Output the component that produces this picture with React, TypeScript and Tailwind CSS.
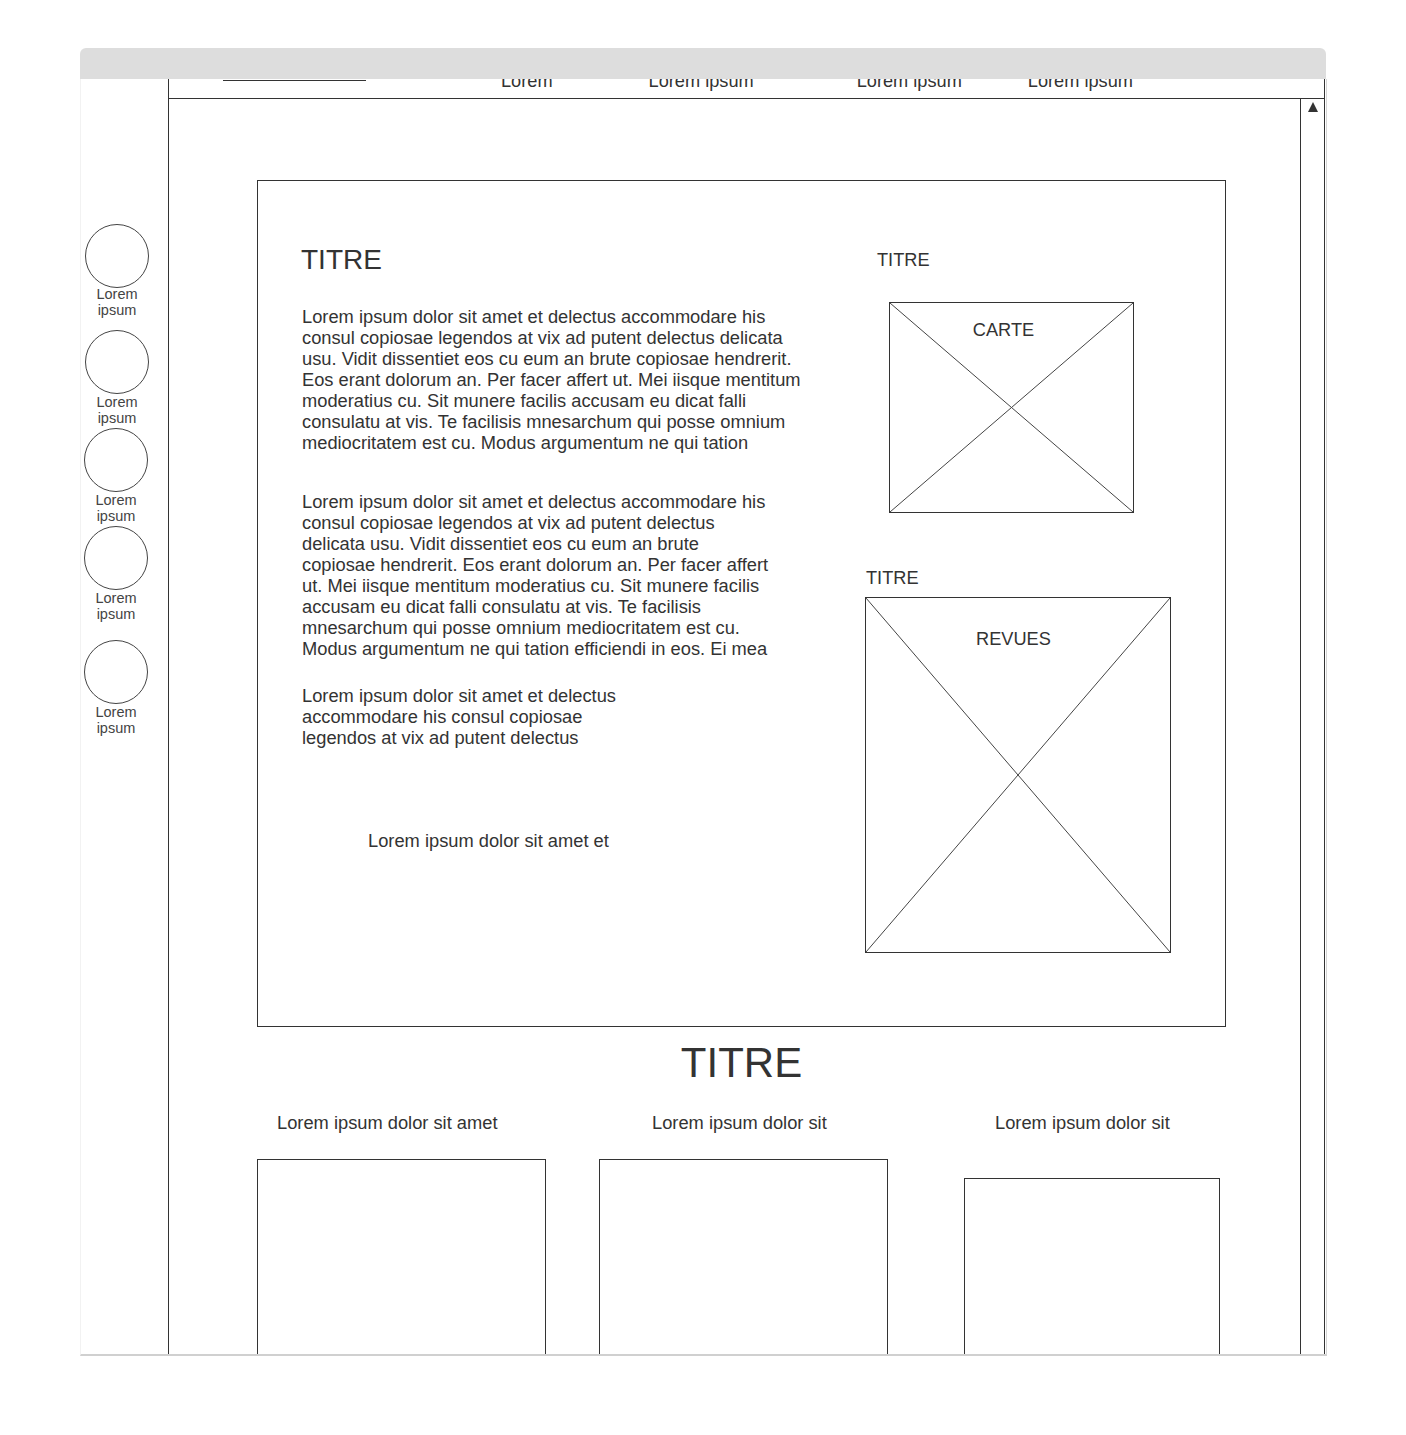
const SIDE_ITEMS = [
  { mt: "mt-[145px]", ml: "ml-[4px]", lm: "-mt-[2px]" },
  { mt: "mt-[12px]", ml: "ml-[4px]", lm: "mt-0" },
  { mt: "mt-[2px]", ml: "ml-[3px]", lm: "mt-0" },
  { mt: "mt-[2px]", ml: "ml-[3px]", lm: "mt-0" },
  { mt: "mt-[18px]", ml: "ml-[3px]", lm: "mt-0" },
];

const P1 = [
  "Lorem ipsum dolor sit amet et delectus accommodare his",
  "consul copiosae legendos at vix ad putent delectus delicata",
  "usu. Vidit dissentiet eos cu eum an brute copiosae hendrerit.",
  "Eos erant dolorum an. Per facer affert ut. Mei iisque mentitum",
  "moderatius cu. Sit munere facilis accusam eu dicat falli",
  "consulatu at vis. Te facilisis mnesarchum qui posse omnium",
  "mediocritatem est cu. Modus argumentum ne qui tation",
];

const P2 = [
  "Lorem ipsum dolor sit amet et delectus accommodare his",
  "consul copiosae legendos at vix ad putent delectus",
  "delicata usu. Vidit dissentiet eos cu eum an brute",
  "copiosae hendrerit. Eos erant dolorum an. Per facer affert",
  "ut. Mei iisque mentitum moderatius cu. Sit munere facilis",
  "accusam eu dicat falli consulatu at vis. Te facilisis",
  "mnesarchum qui posse omnium mediocritatem est cu.",
  "Modus argumentum ne qui tation efficiendi in eos. Ei mea",
];

const P3 = [
  "Lorem ipsum dolor sit amet et delectus",
  "accommodare his consul copiosae",
  "legendos at vix ad putent delectus",
];

function Lines({ lines, className }: { lines: string[]; className?: string }) {
  return (
    <p className={`text-[18.3px] leading-[21px] whitespace-nowrap ${className ?? ""}`}>
      {lines.map((l, i) => (
        <span key={i} className="block">
          {l}
        </span>
      ))}
    </p>
  );
}

// wireframe image placeholder: box with a cross
function Placeholder({ className, label, labelClass }: { className: string; label: string; labelClass: string }) {
  return (
    <div className={`relative border border-[#333] ${className}`}>
      <svg className="absolute inset-0 h-full w-full" preserveAspectRatio="none" viewBox="0 0 100 100">
        <line x1="0" y1="0" x2="100" y2="100" stroke="#444" strokeWidth="1" vectorEffect="non-scaling-stroke" />
        <line x1="100" y1="0" x2="0" y2="100" stroke="#444" strokeWidth="1" vectorEffect="non-scaling-stroke" />
      </svg>
      <p className={`relative text-center text-[18.2px] leading-[21px] ${labelClass}`}>{label}</p>
    </div>
  );
}

export default function App() {
  return (
    <div className="min-h-[1435px] bg-white pt-[48px] pl-[80px] font-['Liberation_Sans',Arial,sans-serif] text-[#333]">
      <div className="w-[1247px]">
        <div className="mr-px h-[31px] rounded-t-[6px] bg-[#dddddd]" />
        <div className="flex h-[1277px] overflow-hidden border-r border-b-2 border-l border-r-[#d4d4d4] border-b-[#d0d0d0] border-l-[#f2f2f2]">
          {/* left rail */}
          <div className="flex w-[87px] shrink-0 flex-col">
            {SIDE_ITEMS.map((it, i) => (
              <div key={i} className={`flex w-[64px] flex-col items-center ${it.mt} ${it.ml}`}>
                <div className="h-[64px] w-[64px] rounded-full border border-[#444]" />
                <p className={`text-center text-[14.5px] leading-[16px] text-[#444] ${it.lm}`}>
                  Lorem
                  <br />
                  ipsum
                </p>
              </div>
            ))}
          </div>

          {/* main window */}
          <div className="flex w-[1157px] shrink-0 flex-col border-x border-[#333]">
            <div className="relative flex h-[20px] shrink-0 items-start overflow-hidden border-b border-[#333] text-[18.2px] leading-[21px] whitespace-nowrap">
              <div className="absolute top-px left-[54px] h-px w-[143px] bg-[#333]" />
              <span className="-mt-[8px] ml-[332px]">Lorem</span>
              <span className="-mt-[8px] ml-[96px]">Lorem ipsum</span>
              <span className="-mt-[8px] ml-[103px]">Lorem ipsum</span>
              <span className="-mt-[8px] ml-[66px]">Lorem ipsum</span>
            </div>

            <div className="flex min-h-0 flex-1">
              <div className="w-[1131px] shrink-0 pt-[81px] pl-[88px]">
                <div className="w-[969px]">
                  <div className="flex h-[847px] border border-[#333]">
                    <div className="w-[600px] shrink-0 pt-[63px] pl-[43px]">
                      <h1 className="text-[28px] leading-[32px]">TITRE</h1>
                      <Lines lines={P1} className="mt-[30px] ml-px" />
                      <Lines lines={P2} className="mt-[38px] ml-px" />
                      <Lines lines={P3} className="mt-[26px] ml-px" />
                      <Lines lines={["Lorem ipsum dolor sit amet et"]} className="mt-[82px] ml-[67px]" />
                    </div>
                    <div className="flex flex-1 flex-col">
                      <p className="mt-[69px] ml-[19px] text-[18.2px] leading-[21px]">TITRE</p>
                      <Placeholder
                        className="mt-[31px] ml-[31px] h-[211px] w-[245px]"
                        label="CARTE"
                        labelClass="pt-[17px] pr-[16px]"
                      />
                      <p className="mt-[55px] ml-[8px] text-[18.2px] leading-[21px]">TITRE</p>
                      <Placeholder
                        className="mt-[8px] ml-[7px] h-[356px] w-[306px]"
                        label="REVUES"
                        labelClass="pt-[31px] pr-[9px]"
                      />
                    </div>
                  </div>

                  <h2 className="mt-[12px] text-center text-[42px] leading-[48px]">TITRE</h2>

                  <div className="mt-[25px] flex items-start">
                    <div className="w-[289px] shrink-0">
                      <p className="ml-[20px] text-[18.3px] leading-[21px] whitespace-nowrap">Lorem ipsum dolor sit amet</p>
                      <div className="mt-[26px] h-[260px] border border-[#333]" />
                    </div>
                    <div className="ml-[53px] w-[289px] shrink-0">
                      <p className="ml-[53px] text-[18.3px] leading-[21px] whitespace-nowrap">Lorem ipsum dolor sit</p>
                      <div className="mt-[26px] h-[260px] border border-[#333]" />
                    </div>
                    <div className="ml-[76px] w-[256px] shrink-0">
                      <p className="ml-[31px] text-[18.3px] leading-[21px] whitespace-nowrap">Lorem ipsum dolor sit</p>
                      <div className="mt-[45px] h-[260px] border border-[#333]" />
                    </div>
                  </div>
                </div>
              </div>

              {/* scrollbar */}
              <div className="flex-1 border-l border-[#333] pt-[3px] pl-[7px]">
                <div className="h-0 w-0 border-r-[5px] border-b-[10px] border-l-[5px] border-r-transparent border-b-[#333] border-l-transparent" />
              </div>
            </div>
          </div>
        </div>
      </div>
    </div>
  );
}
